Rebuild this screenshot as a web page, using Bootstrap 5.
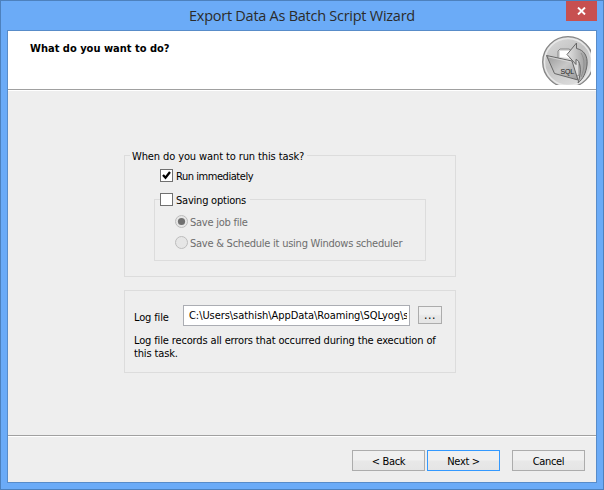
<!DOCTYPE html>
<html lang="en">
<head>
<meta charset="utf-8">
<title>Export Data As Batch Script Wizard</title>
<link href="https://cdn.jsdelivr.net/npm/bootstrap@5.3.0/dist/css/bootstrap.min.css" rel="stylesheet">
<style>
body{width:604px;height:490px;overflow:hidden;font:11px/13px "DejaVu Sans Condensed","DejaVu Sans",sans-serif;color:#000}
.wizard{width:604px;height:490px;background:#6babf7;border:1px solid #4d81bd;padding:0 6px 6px}
.titlebar{height:29px;font:14.5px/29px "Open Sans","Noto Sans",sans-serif;color:#2b2b2b;letter-spacing:-.26px}
.close-btn{right:0;top:0;width:31px;height:20px;background:#c75050;border:0;padding:0}
.client{height:453px;border:1px solid #588cc9;background:#eee}
.head{height:60px;background:#fff;border-bottom:1px solid #fff;box-shadow:inset 0 -1px #a0a0a0;padding:10px 5px 0 22px}
.head h1{font-size:11px;line-height:16px}
.emblem{margin-top:-5px;flex:none}
.groups{height:344px;padding:58px 140px 0 116px}
.group{width:332px;border:1px solid #dcdcdc}
.task{height:128px;padding:0 0 0 35px;margin:0;min-width:0}
.task legend{float:none;width:auto;height:13px;font-size:11px;line-height:15px;margin:0 0 0 -30px;padding:0 3px 0 2px;letter-spacing:-.11px}
.tick{width:13px;height:13px;border:1px solid #707070;background:#fff;flex:none}
.run{height:13px;line-height:15px;margin-top:7px;gap:3px;letter-spacing:-.45px}
.saving{width:272px;height:68px;margin:11px 0 0 -6px;border:1px solid #dcdcdc;padding:0 0 0 20px;min-width:0}
.saving legend{margin:0 0 0 -15px;padding:0 4px 0 0;display:flex;gap:3px;letter-spacing:-.22px}
.opt{height:13px;line-height:15px;gap:2px;color:#6d6d6d;margin-top:9px;letter-spacing:-.24px}
.opt+.opt{margin-top:8px}
.logbox{height:83px;margin-top:13px;padding:14px 0 0 9px;letter-spacing:-.14px}
.loglabel{width:49px;padding-top:6px}
.logfield{width:227px;height:21px;border:1px solid #abadb3;background:#fff;padding:0 2px 0 5px;line-height:19px;letter-spacing:-.06px}
.logfield div{overflow:hidden;white-space:nowrap}
.wbtn{width:73px;height:21px;flex:none;border:1px solid #acacac;border-radius:0;padding:0;font-size:11px;line-height:21px;color:#000;letter-spacing:-.32px;background:linear-gradient(#f0f0f0 0 45%,#e8e8e8 55%,#e5e5e5)}
.wbtn.next{border-color:#3399ff;margin:0 12px 0 2px}
.browse{width:24px;height:18px;margin:1px 0 0 8px;line-height:16px;letter-spacing:.6px;font-size:12px}
.foot{height:47px;border-top:1px solid #a0a0a0;box-shadow:inset 0 1px #fff;padding:14px 11px 0 0}
</style>
<script src="https://cdn.jsdelivr.net/npm/bootstrap@5.3.0/dist/js/bootstrap.bundle.min.js"></script>
</head>
<body>
<div class="wizard">
  <div class="titlebar text-center position-relative">Export Data As Batch Script Wizard
    <button class="close-btn position-absolute d-flex align-items-center justify-content-center" aria-label="Close"><svg width="9" height="8" viewBox="0 0 9 8"><path d="M1 .5 8 7.500M8 .5 1 7.500" stroke="#fff" stroke-width="1.900"/></svg></button>
  </div>
  <div class="client">
    <header class="head d-flex justify-content-between">
      <h1 class="fw-bold mb-0">What do you want to do?</h1>
      <svg class="emblem" width="49" height="49" viewBox="0 0 49 49">
        <defs><linearGradient id="disc" x2=".6" y2="1"><stop stop-color="#ddd"/><stop offset=".5" stop-color="#c2c2c2"/><stop offset="1" stop-color="#ddd"/></linearGradient>
        <linearGradient id="fold" x2="1" y2="1"><stop stop-color="#999"/><stop offset=".5" stop-color="#c8c8c8"/><stop offset="1" stop-color="#999"/></linearGradient>
        <linearGradient id="arr" x2="1"><stop stop-color="#e4e4e4"/><stop offset="1" stop-color="#999"/></linearGradient></defs>
        <circle cx="26" cy="26" r="25.300" fill="url(#disc)" stroke="#858585" stroke-width="1.300"/>
        <circle cx="26" cy="26" r="23.500" fill="none" stroke="#e8e8e8" stroke-width="1.400"/>
        <path d="M16 22V15l2-2h9l3 2h7v24l-5 3z" fill="#dcdcdc" stroke="#888"/>
        <path d="M18 21v-6h9v7z" fill="#fff"/>
        <path d="M4.500 19.500 30 25 36 44 12.500 37.500z" fill="url(#fold)" stroke="#666"/>
        <path d="M6.500 21 29 26" stroke="#ddd" stroke-width=".8"/>
        <path d="M25 18.500 34.500 7v5.500C42 14 46 20 45 29c-1 8-4 14-9 18 2-7 3-12 2-17-.5-4-2-6-4-6.500v5z" fill="url(#arr)" stroke="#666"/>
        <path d="M39 17c4 6 4 15 0 24" fill="none" stroke="#888" stroke-width=".8"/>
        <text x="18.500" y="38" font-family="Liberation Sans,sans-serif" font-size="7" letter-spacing="-.2" fill="#222">SQL</text>
      </svg>
    </header>
    <main class="groups">
      <fieldset class="group task">
        <legend class="text-nowrap">When do you want to run this task?</legend>
        <label class="run d-flex"><span class="tick"><svg class="d-block" width="11" height="11" viewBox="0 0 11 11"><path d="M2 5 4.500 7.700 9 2" fill="none" stroke="#000" stroke-width="2.300"/></svg></span><span class="text-nowrap">Run immediately</span></label>
        <fieldset class="saving">
          <legend class="text-nowrap"><span class="tick"></span><span>Saving options</span></legend>
          <label class="opt d-flex"><svg width="13" height="13"><circle cx="6.500" cy="6.500" r="6" fill="#e6e6e6" stroke="#bcbcbc"/><circle cx="6.500" cy="6.500" r="3.600" fill="#707070"/></svg><span class="text-nowrap">Save job file</span></label>
          <label class="opt d-flex"><svg width="13" height="13"><circle cx="6.500" cy="6.500" r="6" fill="#e6e6e6" stroke="#bcbcbc"/></svg><span class="text-nowrap">Save &amp; Schedule it using Windows scheduler</span></label>
        </fieldset>
      </fieldset>
      <section class="group logbox">
        <div class="d-flex"><span class="loglabel text-nowrap">Log file</span>
          <div class="logfield"><div>C:\Users\sathish\AppData\Roaming\SQLyog\s</div></div>
          <button class="wbtn browse">...</button></div>
        <p class="mb-0 mt-2 text-nowrap">Log file records all errors that occurred during the execution of<br>this task.</p>
      </section>
    </main>
    <footer class="foot d-flex justify-content-end">
      <button class="wbtn">&lt; Back</button><button class="wbtn next">Next &gt;</button><button class="wbtn">Cancel</button>
    </footer>
  </div>
</div>
</body>
</html>
